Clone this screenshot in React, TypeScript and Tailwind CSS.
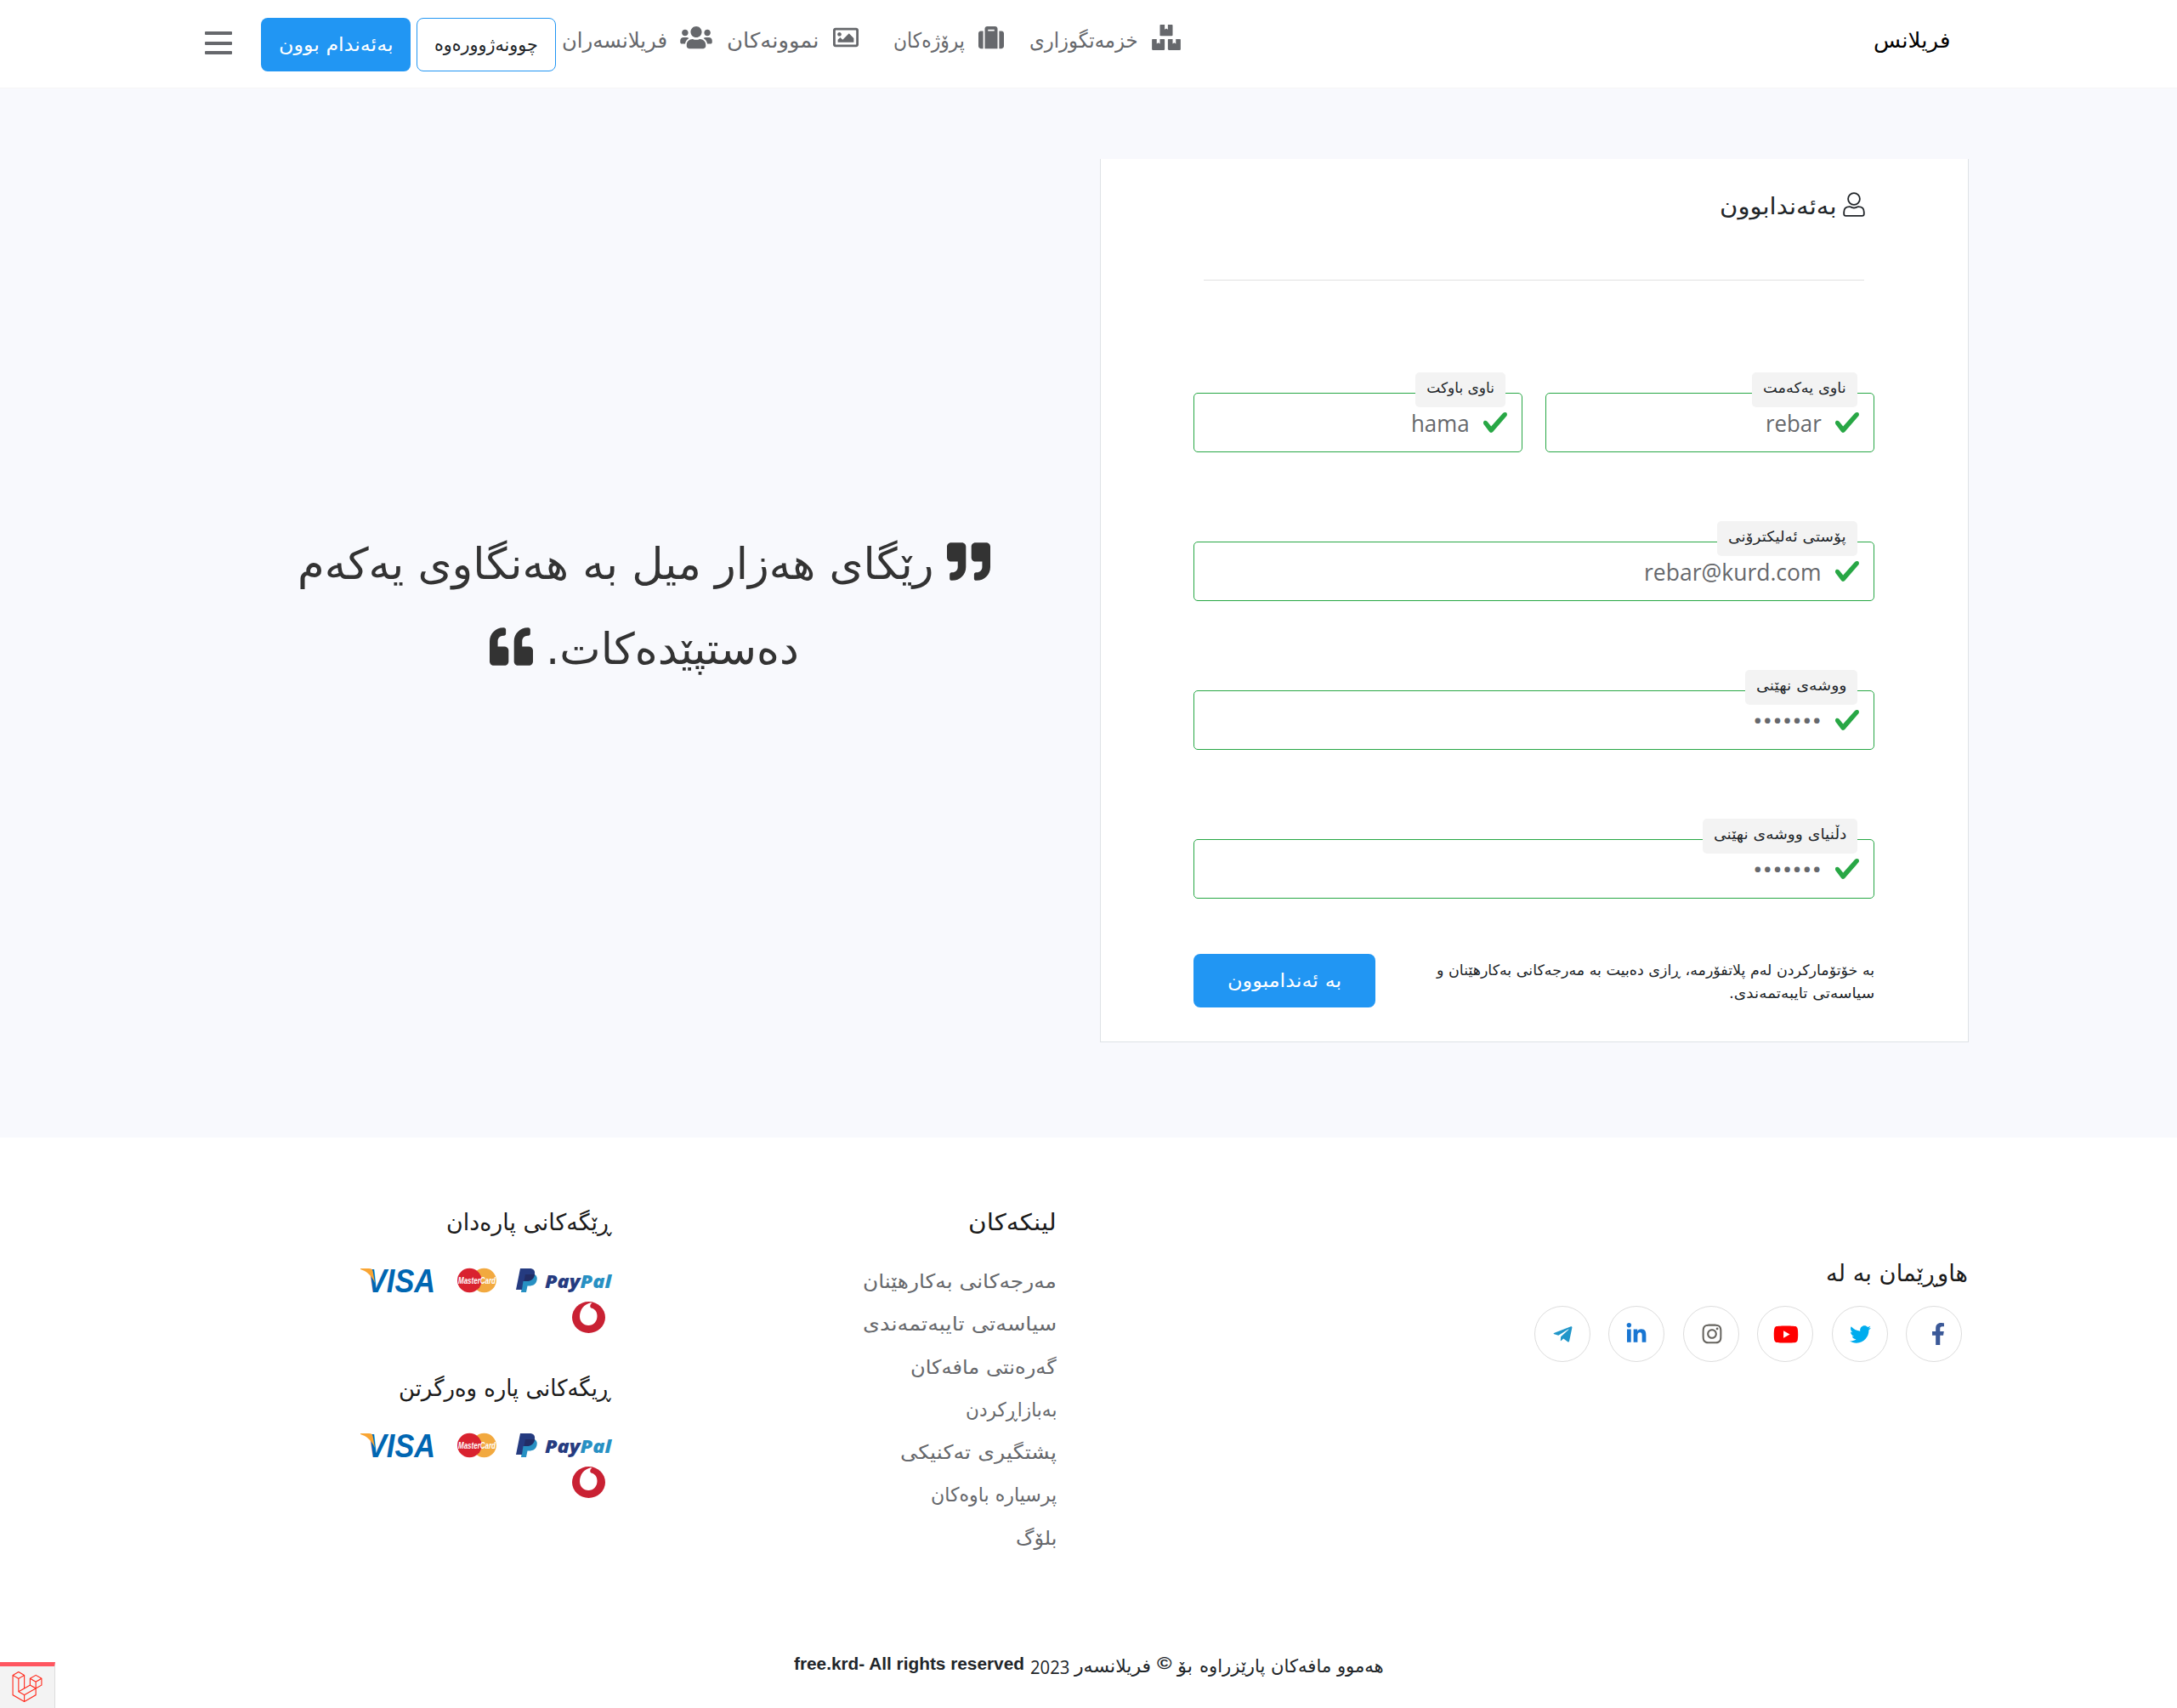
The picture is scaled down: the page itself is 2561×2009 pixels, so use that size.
import React, { useLayoutEffect, useRef, useState } from "react";
import {
  FaBoxes,
  FaFacebookF,
  FaInstagram,
  FaLaravel,
  FaLinkedinIn,
  FaQuoteLeft,
  FaQuoteRight,
  FaRegImage,
  FaSuitcase,
  FaTelegramPlane,
  FaTwitter,
  FaUsers,
  FaYoutube,
} from "react-icons/fa";

/** One line of text, stretched horizontally to the width of its box. */
function Fit({ className, children, dir = "rtl" }: { className: string; children: React.ReactNode; dir?: "rtl" | "ltr" }) {
  const box = useRef<HTMLSpanElement>(null);
  const text = useRef<HTMLSpanElement>(null);
  const [scale, setScale] = useState(1);
  useLayoutEffect(() => {
    if (box.current && text.current) {
      setScale(box.current.clientWidth / text.current.offsetWidth);
    }
  }, []);
  return (
    <span ref={box} dir={dir} className={"flex shrink-0 justify-start whitespace-nowrap " + className}>
      <span
        ref={text}
        className={dir === "rtl" ? "block shrink-0 origin-right" : "block shrink-0 origin-left"}
        style={{ transform: `scaleX(${scale})` }}
      >
        {children}
      </span>
    </span>
  );
}

const NAV = "mt-[28px] text-[24.5px] leading-[40px]";

function Header() {
  return (
    <header className="flex h-[104px] items-start border-b border-[#f5f5f6] bg-white pr-[267px] text-[#66686c]">
      <Fit className="mt-[28px] ml-[816px] w-[90px] text-[25px] leading-[40px] text-black">فریلانس</Fit>
      <FaBoxes className="mt-[29px] -mr-px h-[30px] w-[34px] shrink-0" />
      <Fit className={NAV + " mr-[16px] w-[128px]"}>خزمەتگوزاری</Fit>
      <FaSuitcase className="mt-[29px] mr-[30px] size-[30px] shrink-0" />
      <Fit className={NAV + " mr-[16px] w-[84px]"}>پرۆژەکان</Fit>
      <FaRegImage className="mt-[29px] mr-[41px] size-[30px] shrink-0" />
      <Fit className={NAV + " mr-[16px] w-[109px]"}>نموونەکان</Fit>
      <FaUsers className="mt-[29px] mr-[17px] h-[30px] w-[38px] shrink-0" />
      <Fit className={NAV + " mr-[15px] w-[124px]"}>فریلانسەران</Fit>
      <button className="mt-[21px] mr-[7px] flex h-[63px] w-[164px] shrink-0 items-center justify-center rounded-[8px] border border-[#2196f3] text-[#212529]">
        <Fit className="w-[122px] text-[22px] leading-[58px]">چوونەژوورەوە</Fit>
      </button>
      <button className="mt-[21px] mr-[7px] flex h-[63px] w-[176px] shrink-0 items-center justify-center rounded-[8px] bg-[#2196f3] text-white">
        <Fit className="w-[135px] text-[22px] leading-[56px]">بەئەندام بوون</Fit>
      </button>
      <div className="mt-[37px] mr-[34px] flex w-[32px] shrink-0 flex-col gap-[7.5px]">
        <div className="h-[4px] rounded-[1px] bg-[#66686c]" />
        <div className="h-[4px] rounded-[1px] bg-[#66686c]" />
        <div className="h-[4px] rounded-[1px] bg-[#66686c]" />
      </div>
    </header>
  );
}

function Field({ label, labelWidth, value, valueWidth }: { label: string; labelWidth: string; value: string; valueWidth: string }) {
  return (
    <div className="relative flex h-[70px] flex-1 items-start rounded-[5px] border border-[#28a745] pr-[15px]">
      <span className="absolute -top-[25px] right-[19px] flex h-[41px] rounded-[5px] bg-[#f3f3f3] px-[13px]">
        <Fit className={labelWidth + " text-[17px] leading-[36px] text-[#212529]"}>{label}</Fit>
      </span>
      <svg viewBox="0 0 8 8" className="mt-[18px] size-[32px] shrink-0" fill="#28a745">
        <path d="M2.3 6.73L.6 4.53c-.4-1.04.46-1.4 1.1-.8l1.1 1.4 3.4-3.8c.6-.63 1.6-.27 1.2.7l-4 4.6c-.43.5-.8.4-1.1.1z" />
      </svg>
      <Fit
        dir="ltr"
        className={valueWidth + " mt-[15px] mr-[14px] font-['Open_Sans',sans-serif] text-[27px] leading-[40px] text-[#66686c]"}
      >
        {value}
      </Fit>
    </div>
  );
}

function SignUpCard() {
  return (
    <section className="mt-[83px] h-[1039px] w-[1022px] shrink-0 border-x border-b border-[#dee2e6] bg-white">
      <div className="flex h-[73px] items-start pt-[36px] pr-[121px] text-[#212529]">
        <svg viewBox="0 0 26 29" className="mt-[3px] h-[29px] w-[26px] shrink-0" fill="none" stroke="currentColor" strokeWidth="1.8">
          <circle cx="13" cy="8" r="6.900" />
          <path d="M8 17.200C3.600 17.200 1.200 19.800 1.200 23.500v2.300c0 1.300.8 2.100 2.100 2.100h19.400c1.300 0 2.100-.8 2.100-2.100v-2.300c0-3.700-2.400-6.300-6.800-6.300-1.800 0-2.800 1.300-5 1.300s-3.200-1.300-5-1.300z" />
        </svg>
        <Fit className="mr-[8px] w-[138px] text-[27px] leading-[40px]">بەئەندابوون</Fit>
      </div>
      <div className="mt-[69px] mr-[122px] ml-[121px] h-px bg-[#e1e1e1]" />
      <div className="mt-[132px] mr-[110px] ml-[109px] flex flex-col">
        <div className="flex gap-[27px]">
          <Field label="ناوی یەکەمت" labelWidth="w-[98px]" value="rebar" valueWidth="w-[66px]" />
          <Field label="ناوی باوکت" labelWidth="w-[80px]" value="hama" valueWidth="w-[69px]" />
        </div>
        <div className="mt-[105px] flex">
          <Field label="پۆستی ئەلیکترۆنی" labelWidth="w-[139px]" value="rebar@kurd.com" valueWidth="w-[209px]" />
        </div>
        <div className="mt-[105px] flex">
          <Field label="ووشەی نهێنی" labelWidth="w-[106px]" value="•••••••" valueWidth="w-[81px]" />
        </div>
        <div className="mt-[105px] flex">
          <Field label="دڵنیای ووشەی نهێنی" labelWidth="w-[156px]" value="•••••••" valueWidth="w-[81px]" />
        </div>
        <div className="mt-[65px] flex items-start justify-between">
          <div className="mt-[6px] text-[17px] leading-[27px] text-[#212529]">
            <Fit className="w-[515px]">بە خۆتۆمارکردن لەم پلاتفۆرمە، ڕازی دەبیت بە مەرجەکانی بەکارهێنان و</Fit>
            <Fit className="w-[171px]">سیاسەتی تایبەتمەندی.</Fit>
          </div>
          <button className="flex h-[63px] w-[214px] items-center justify-center rounded-[8px] bg-[#2196f3] text-white">
            <Fit className="w-[134px] text-[22px] leading-[56px]">بە ئەندامبوون</Fit>
          </button>
        </div>
      </div>
    </section>
  );
}

function Quote() {
  return (
    <section className="mt-[507px] mr-[26px] flex w-[1021px] flex-col items-center text-[51px] leading-[100px] text-[#333333]">
      <div className="flex">
        <FaQuoteRight className="mt-[24px] size-[51px] shrink-0" />
        <Fit className="mt-[3px] mr-[15px] w-[748px]">رێگای هەزار میل بە هەنگاوی یەکەم</Fit>
      </div>
      <div className="-mt-[3px] flex">
        <Fit className="mt-[3px] w-[298px]">دەستپێدەکات.</Fit>
        <FaQuoteLeft className="mt-[24px] mr-[15px] size-[51px] shrink-0" />
      </div>
    </section>
  );
}

const SOCIAL = [
  { icon: <FaFacebookF className="mr-[-9px] size-[26px] text-[#3b5998]" /> },
  { icon: <FaTwitter className="mr-[-2px] size-[25px] text-[#00acee]" /> },
  { icon: <FaYoutube className="mr-[-2px] h-[27px] w-[30px] text-[#ff0000]" /> },
  { icon: <FaInstagram className="mr-[-2px] size-[26px] text-[#66645f]" /> },
  { icon: <FaLinkedinIn className="size-[26px] text-[#1976d2]" /> },
  { icon: <FaTelegramPlane className="size-[25px] text-[#2196c9]" /> },
];

const LINKS = [
  { text: "مەرجەکانی بەکارهێنان", width: "w-[228px]" },
  { text: "سیاسەتی تایبەتمەندی", width: "w-[228px]" },
  { text: "گەرەنتی مافەکان", width: "w-[172px]" },
  { text: "بەبازاڕکردن", width: "w-[107px]" },
  { text: "پشتگیری تەکنیکی", width: "w-[184px]" },
  { text: "پرسیارە باوەکان", width: "w-[148px]" },
  { text: "بلۆگ", width: "w-[48px]" },
];

function PaymentLogos() {
  return (
    <div>
      <div className="flex h-[28px] items-start" dir="ltr">
        <div className="flex-1" />
        <svg viewBox="0 0 90 28" className="h-[28px] w-[90px] overflow-visible">
          <text x="9" y="27.800" fontSize="38.500" fontWeight="700" fontStyle="italic" fontFamily="Liberation Sans" fill="#0066b2" textLength="80" lengthAdjust="spacingAndGlyphs">
            VISA
          </text>
          <path d="M1 0h10c3 0 4 1 4.500 3L18 17C14 8 8 3 1 1z" fill="#f9a533" />
        </svg>
        <svg viewBox="0 0 46 28" className="ml-[25px] h-[28px] w-[46px] overflow-visible">
          <circle cx="31.500" cy="14" r="14.300" fill="#f2a93f" />
          <circle cx="14.300" cy="14" r="14.300" fill="#d9222f" />
          <path d="M20 6h6M19 8.500h8M19 20h8M20 22.500h6" stroke="#d9222f" strokeWidth="1" />
          <text x="1" y="17.500" fontSize="10" fontWeight="700" fontStyle="italic" fontFamily="Liberation Sans" fill="#ffffff" textLength="44" lengthAdjust="spacingAndGlyphs">
            MasterCard
          </text>
        </svg>
        <svg viewBox="0 0 112 28" className="ml-[23px] h-[28px] w-[112px] overflow-visible">
          <path d="M9 7h13c2.500 1.500 3.300 4 2.500 7-1 4.500-4.500 6.500-9 6.500h-2L12 28H6z" fill="#2790c3" />
          <path d="M5 0h11c4.500 0 6.800 2.600 6 7-1 5.500-4.500 8-10 8H8.500L7 25H0z" fill="#253b80" />
          <path d="M11 7h11c-.8 5.500-4.500 8-10 8H9.500z" fill="#222d65" />
          <text x="34" y="22.500" fontSize="21.500" fontWeight="800" fontStyle="italic" fontFamily="Open Sans" textLength="78" lengthAdjust="spacingAndGlyphs">
            <tspan fill="#253b80">Pay</tspan>
            <tspan fill="#2790c3">Pal</tspan>
          </text>
        </svg>
      </div>
      <svg viewBox="0 0 39 37" className="mt-[11px] mr-[7px] h-[37px] w-[39px]">
        <ellipse cx="19.500" cy="18.500" rx="19.500" ry="18.500" fill="#c92133" />
        <path d="M22 1.200C14 3 9 9.500 9 17.500 9 23.500 13.500 28 19.300 28S29.500 23.500 29.500 17c0-5-2.500-8.300-7-9.500C20.500 6.500 21 3 23.500 1.800z" fill="#ffffff" />
      </svg>
    </div>
  );
}

function Footer() {
  return (
    <footer className="flex h-[671px] flex-col bg-white">
      <div className="flex h-[601px] items-start pr-[246px] text-[27px] leading-[40px] text-[#1b1b1b]">
        <div className="mt-[140px] w-[1072px] shrink-0">
          <Fit className="w-[167px]">هاوڕێمان بە لە</Fit>
          <div className="mt-[18px] flex gap-[21.4px] pr-[7px]">
            {SOCIAL.map((s, i) => (
              <a key={i} className="flex size-[66px] items-center justify-center rounded-full border border-[#dddddd]">
                {s.icon}
              </a>
            ))}
          </div>
        </div>
        <div className="mt-[80px] w-[524px] shrink-0">
          <Fit className="w-[104px]">لینکەکان</Fit>
          <div className="mt-[24px] text-[23px] leading-[50.3px] text-[#66686c]">
            {LINKS.map((l) => (
              <Fit key={l.text} className={l.width}>
                {l.text}
              </Fit>
            ))}
          </div>
        </div>
        <div className="mt-[80px] w-[296px] shrink-0">
          <Fit className="mb-[34px] w-[194px]">ڕێگەکانی پارەدان</Fit>
          <PaymentLogos />
          <Fit className="mt-[45px] mb-[33px] w-[250px]">ڕیگەکانی پارە وەرگرتن</Fit>
          <PaymentLogos />
        </div>
      </div>
      <div className="flex justify-center gap-[7px] text-[21.5px] leading-[40px] text-[#212529]">
        <Fit className="mt-px w-[217px]">هەموو مافەکان پارێزراوە</Fit>
        <Fit className="mt-px w-[18px]">بۆ</Fit>
        <Fit className="-mt-[3px] w-[17px] font-['Liberation_Sans',sans-serif] text-[21px] font-bold">©</Fit>
        <Fit className="mt-px w-[90px]">فریلانسەر</Fit>
        <Fit dir="ltr" className="mt-px w-[46px] font-['Open_Sans',sans-serif] text-[22px]">2023</Fit>
        <Fit dir="ltr" className="-mt-[2px] w-[271px] font-['Liberation_Sans',sans-serif] text-[19.5px] font-bold">
          free.krd- All rights reserved
        </Fit>
      </div>
    </footer>
  );
}

export default function App() {
  return (
    <div dir="rtl" className="relative h-[2009px] w-[2561px] overflow-hidden bg-white font-['DejaVu_Sans',sans-serif]">
      <Header />
      <main className="flex h-[1234px] items-start bg-[#f8f9fd] pr-[245px]">
        <SignUpCard />
        <Quote />
      </main>
      <Footer />
      <div className="absolute bottom-0 left-0 flex h-[54px] w-[65px] items-start justify-center border-t-[5px] border-r border-t-[#ff5660] border-r-[#dddddd] bg-[#f3f3f3] pt-[6px]">
        <FaLaravel className="size-[36px] text-[#ff2d20]" />
      </div>
    </div>
  );
}
